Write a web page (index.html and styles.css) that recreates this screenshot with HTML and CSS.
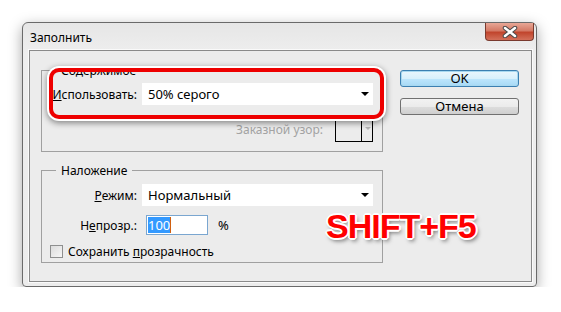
FILE: index.html
```html
<!DOCTYPE html>
<html lang="ru">
<head>
    <meta charset="UTF-8">
    <title>Заполнить</title>
    <link rel="stylesheet" href="styles.css">
</head>
<body>
    <div class="window">
        <div class="titlebar">
            <span class="title">Заполнить</span>
            <span class="close">
                <svg width="20" height="12" viewBox="0 0 20 12">
                    <path d="M5 2 L15 10 M15 2 L5 10" stroke="#4a4a4a" stroke-width="4.5" stroke-linecap="round"/>
                    <path d="M5 2 L15 10 M15 2 L5 10" stroke="#fff" stroke-width="2.5" stroke-linecap="round"/>
                </svg>
            </span>
        </div>
        <div class="client">
            <div class="groups">
                <fieldset class="group group-content">
                    <legend>Содержимое</legend>
                    <div class="row">
                        <label class="label"><u>И</u>спользовать:</label>
                        <div class="select">50% серого<span class="arrow"></span></div>
                    </div>
                    <div class="row row-pattern">
                        <label class="label label-wide disabled">Заказной узор:</label>
                        <div class="swatch"><span class="swatch-arrow"></span></div>
                    </div>
                </fieldset>
                <fieldset class="group group-blend">
                    <legend>Наложение</legend>
                    <div class="row">
                        <label class="label"><u>Р</u>ежим:</label>
                        <div class="select">Нормальный<span class="arrow"></span></div>
                    </div>
                    <div class="row row-opacity">
                        <label class="label">Н<u>е</u>прозр.:</label>
                        <div class="input"><span class="selected">100</span><span class="caret"></span></div>
                        <span class="percent">%</span>
                    </div>
                    <div class="check-row">
                        <span class="checkbox"></span>
                        <span>Сохранить <u>п</u>розрачность</span>
                    </div>
                </fieldset>
            </div>
            <div class="buttons">
                <button class="btn btn-default">OK</button>
                <button class="btn">Отмена</button>
            </div>
        </div>
        <div class="highlight"></div>
        <div class="hotkey">SHIFT+F5</div>
    </div>
</body>
</html>
```

FILE: styles.css
```css
body {
    margin: 0;
    padding: 22px 0 0 22px;
    background: #fff;
    font-family: "Noto Sans", sans-serif;
    font-size: 12px;
    color: #000;
}

.window {
    position: relative;
    width: 515px;
    height: 265px;
    box-sizing: border-box;
    background: linear-gradient(#e6e6e6, #eeeeee 30px, #ececec);
    border: 1px solid #6a6a6a;
    border-radius: 6px 6px 4px 4px;
    box-shadow: 0 4px 14px rgba(0, 0, 0, 0.35);
    display: flex;
    flex-direction: column;
}

.titlebar {
    height: 27px;
    display: flex;
    justify-content: space-between;
    align-items: flex-start;
    padding: 0 2px 0 7px;
}

.title {
    margin-top: 6px;
    font-size: 12px;
}

.close {
    width: 47px;
    height: 17px;
    border: 1px solid #7a3a2e;
    border-top: none;
    border-radius: 0 0 4px 4px;
    background: linear-gradient(#e8a796, #d47a66 45%, #c1452d 55%, #d3705a);
    display: flex;
    justify-content: center;
    align-items: center;
}

.client {
    flex: 1;
    margin: 0 4px 4px 6px;
    border: 1px solid #8a8a8a;
    box-shadow: 0 0 0 1px #fafafa;
    background: #ececec;
    display: flex;
    padding: 11px 13px 18px 11px;
}

.groups {
    width: 342px;
    display: flex;
    flex-direction: column;
    gap: 10px;
}

.group {
    margin: 0;
    border: 1px solid #a0a0a0;
    padding: 0 9px 0 0;
}

.group legend {
    margin-left: 14px;
    padding: 0 5px;
    line-height: 17px;
}

.group-content {
    height: 90px;
    box-sizing: border-box;
    padding-top: 4px;
}

.group-blend {
    flex: 1;
    padding-top: 5px;
}

.row {
    display: flex;
    align-items: center;
}

.label {
    width: 95px;
    margin-right: 5px;
    text-align: right;
}

.label-wide {
    width: auto;
    margin-left: auto;
}

.disabled {
    color: #a3a3a3;
}

.select {
    position: relative;
    width: 225px;
    height: 22px;
    line-height: 22px;
    padding-left: 6px;
    background: #fff;
    font-size: 13px;
}

.arrow {
    position: absolute;
    right: 4px;
    top: 9px;
    border-left: 4px solid transparent;
    border-right: 4px solid transparent;
    border-top: 4px solid #000;
}

.row-pattern {
    margin-top: 11px;
    justify-content: flex-end;
}

.row-pattern .label {
    margin-right: 12px;
}

.swatch {
    position: relative;
    width: 36px;
    height: 24px;
    border: 1px solid #000;
    display: flex;
    justify-content: flex-end;
}

.swatch-arrow {
    width: 10px;
    border-left: 1px solid #000;
    position: relative;
}

.swatch-arrow::after {
    content: "";
    position: absolute;
    left: 3px;
    top: 10px;
    border-left: 3px solid transparent;
    border-right: 3px solid transparent;
    border-top: 3px solid #b5b5b5;
}

.row-opacity {
    margin-top: 9px;
}

.input {
    width: 59px;
    height: 18px;
    margin-left: 4px;
    border: 1px solid #7aa6d0;
    background: #fff;
    display: flex;
    align-items: center;
    padding-left: 1px;
    font-size: 13px;
}

.selected {
    background: #3399ff;
    color: #fff;
    line-height: 16px;
}

.caret {
    width: 1px;
    height: 16px;
    background: #d06010;
}

.percent {
    margin-left: 10px;
    font-size: 13px;
}

.check-row {
    display: flex;
    align-items: center;
    gap: 5px;
    margin: 8px 0 0 8px;
}

.checkbox {
    width: 11px;
    height: 11px;
    border: 1px solid #8e8f8f;
    background: linear-gradient(135deg, #dcdcdc, #f6f6f6);
}

.buttons {
    margin-left: 17px;
    display: flex;
    flex-direction: column;
    gap: 11px;
    padding-top: 8px;
}

.btn {
    width: 119px;
    height: 17px;
    padding: 0;
    border: 1px solid #707070;
    border-radius: 3px;
    background: linear-gradient(#f2f2f2, #ebebeb 50%, #dddddd 51%, #cfcfcf);
    font-family: "Noto Sans", sans-serif;
    font-size: 13px;
    line-height: 15px;
    color: #000;
}

.btn-default {
    border-color: #3c7fb1;
    box-shadow: inset 0 0 0 1px #a8d8f0;
    background: linear-gradient(#eaf6fd, #d9f0fc 50%, #bee6fd 51%, #a7d9f5);
}

.highlight {
    position: absolute;
    left: 26px;
    top: 45px;
    width: 327px;
    height: 43px;
    border: 4px solid #ee0000;
    border-radius: 10px;
    box-shadow: 0 0 0 2px #fff, 0 2px 6px 2px rgba(0, 0, 0, 0.45);
}

.hotkey {
    position: absolute;
    left: 303px;
    top: 184px;
    font-family: "Liberation Sans", sans-serif;
    font-weight: bold;
    font-size: 34px;
    letter-spacing: -1px;
    color: #ff0000;
    text-shadow: -1px -1px 0 #fff, 1px -1px 0 #fff, -1px 1px 0 #fff, 1px 1px 0 #fff,
        -2px 0 0 #fff, 2px 0 0 #fff, 0 -2px 0 #fff, 0 2px 0 #fff,
        2px 3px 4px rgba(0, 0, 0, 0.55);
}
```
